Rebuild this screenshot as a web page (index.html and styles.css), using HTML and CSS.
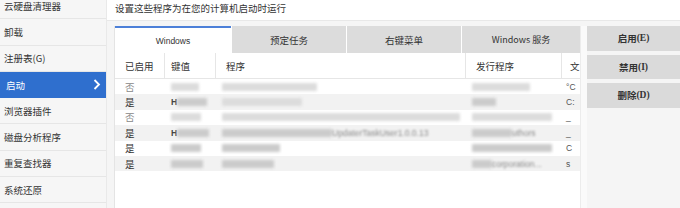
FILE: index.html
```html
<!DOCTYPE html>
<html lang="zh">
<head>
<meta charset="utf-8">
<link rel="stylesheet" href="styles.css">
</head>
<body>
<div class="app">
  <nav class="sidebar">
    <ul class="menu">
      <li class="item">云硬盘清理器</li>
      <li class="item">卸载</li>
      <li class="item">注册表(G)</li>
      <li class="item active">启动<span class="chev"><svg width="8" height="11" viewBox="0 0 8 11"><path d="M1.5 1 L6 5.5 L1.5 10" fill="none" stroke="#fff" stroke-width="1.8"/></svg></span></li>
      <li class="item">浏览器插件</li>
      <li class="item">磁盘分析程序</li>
      <li class="item">重复查找器</li>
      <li class="item">系统还原</li>
    </ul>
  </nav>
  <main class="main">
    <header class="title">设置这些程序为在您的计算机启动时运行</header>
    <div class="body">
      <section class="panel">
        <div class="tabs">
          <div class="tab on">Windows</div>
          <div class="tab">预定任务</div>
          <div class="tab">右键菜单</div>
          <div class="tab">Windows 服务</div>
        </div>
        <div class="table">
          <div class="row head">
            <div class="c c1">已启用</div>
            <div class="c c2">键值</div>
            <div class="c c3">程序</div>
            <div class="c c4">发行程序</div>
            <div class="c c5">文</div>
          </div>
          <div class="row">
            <div class="c c1 dim">否</div>
            <div class="c c2"><span class="bl" style="width:28px"></span></div>
            <div class="c c3"><span class="bl" style="width:95px"></span></div>
            <div class="c c4"><span class="bl" style="width:58px"></span></div>
            <div class="c c5 t">°C</div>
          </div>
          <div class="row alt">
            <div class="c c1">是</div>
            <div class="c c2"><b class="t">H</b><span class="bl d" style="width:30px"></span></div>
            <div class="c c3"><span class="bl" style="width:80px"></span></div>
            <div class="c c4"><span class="bl d" style="width:24px"></span></div>
            <div class="c c5 t">C:</div>
          </div>
          <div class="row">
            <div class="c c1 dim">否</div>
            <div class="c c2"><span class="bl" style="width:30px"></span></div>
            <div class="c c3"><span class="bl" style="width:238px"></span></div>
            <div class="c c4"><span class="bl" style="width:80px"></span></div>
            <div class="c c5 t">_</div>
          </div>
          <div class="row alt">
            <div class="c c1">是</div>
            <div class="c c2"><b class="t">H</b><span class="bl d" style="width:32px"></span></div>
            <div class="c c3"><span class="bl d" style="width:110px"></span><span class="t fz">UpdaterTaskUser1.0.0.13</span></div>
            <div class="c c4"><span class="bl d" style="width:40px"></span><span class="t fz">uthors</span></div>
            <div class="c c5 t">_</div>
          </div>
          <div class="row">
            <div class="c c1">是</div>
            <div class="c c2"><span class="bl d" style="width:30px"></span></div>
            <div class="c c3"><span class="bl d" style="width:58px"></span></div>
            <div class="c c4"><span class="bl d" style="width:80px"></span></div>
            <div class="c c5 t">C</div>
          </div>
          <div class="row alt">
            <div class="c c1">是</div>
            <div class="c c2"><span class="bl d" style="width:32px"></span></div>
            <div class="c c3"><span class="bl d" style="width:52px"></span></div>
            <div class="c c4"><span class="bl d" style="width:20px"></span><span class="t fz">corporation...</span></div>
            <div class="c c5 t">s</div>
          </div>
        </div>
      </section>
      <div class="gutter"></div>
      <aside class="actions">
        <button class="btn">启用<span class="k">(E)</span></button>
        <button class="btn">禁用<span class="k">(I)</span></button>
        <button class="btn">删除<span class="k">(D)</span></button>
      </aside>
    </div>
  </main>
</div>
</body>
</html>
```

FILE: styles.css
```css
* { box-sizing: border-box; margin: 0; padding: 0; }
html, body { width: 680px; height: 208px; overflow: hidden; }
body {
  background: #f5f5f5;
  font-family: "Noto Sans CJK SC", "Noto Sans", sans-serif;
  font-size: 9.5px;
  color: #333;
}
.app { display: flex; height: 208px; }

.sidebar {
  width: 107px;
  flex: none;
  background: #f6f6f6;
  border-right: 1px solid #e9e9e9;
  overflow: hidden;
}
.menu { list-style: none; margin-top: -7px; }
.item {
  height: 26.3px;
  display: flex;
  align-items: center;
  padding-left: 4px;
  border-bottom: 1px solid #e6e6e6;
  color: #333;
}
.item.active {
  background: #2f6fce;
  color: #fff;
  padding-left: 6px;
  justify-content: space-between;
  padding-right: 5px;
  border-bottom-color: #2f6fce;
}
.chev { display: flex; align-items: center; }

.main { flex: 1; display: flex; flex-direction: column; min-width: 0; }
.title {
  height: 21px;
  background: #fff;
  border-bottom: 1px solid #e8e8e8;
  padding-left: 8px;
  display: flex;
  align-items: center;
  padding-bottom: 4px;
  color: #333;
}
.body {
  flex: 1;
  display: flex;
  padding: 5px 0 0 7px;
  background: #f5f5f5;
}
.panel {
  width: 466px;
  flex: none;
  background: #fff;
  border-left: 1px solid #e4e4e4;
  display: flex;
  flex-direction: column;
}
.tabs { display: flex; height: 27px; background: #fff; }
.tab {
  height: 27px;
  width: 115px;
  background: #dcdcdc;
  border-left: 1px solid #fff;
  display: flex;
  align-items: center;
  justify-content: center;
  font-size: 9.5px;
  color: #333;
}
.tab:first-child { border-left: none; width: 116px; }
.tab:last-child { width: 119px; font-size: 9px; }
.tab.on {
  background: #fff;
  border-top: 2px solid #4d80d8;
  font-family: "Liberation Sans", "Noto Sans CJK SC", sans-serif;
  font-size: 8.5px;
}

.table { flex: 1; display: flex; flex-direction: column; }
.row { display: flex; height: 15.4px; align-items: center; background: #fff; }
.row.alt { background: #f2f2f2; }
.row.head {
  height: 26px;
  border-bottom: 1px solid #e6e6e6;
  background: #fff;
}
.c { height: 100%; display: flex; align-items: center; overflow: hidden; white-space: nowrap; }
.c1 { width: 50px; padding-left: 10px; }
.c2 { width: 51px; padding-left: 6px; }
.c3 { width: 250px; padding-left: 6px; }
.c4 { width: 96px; padding-left: 6px; }
.c5 { flex: 1; padding-left: 4px; }
.head .c { border-right: 1px solid #e6e6e6; color: #333; }
.head .c3, .head .c4 { padding-left: 10px; }
.head .c5 { border-right: none; padding-left: 8px; }
.dim { color: #888; }
.t { font-family: "Liberation Sans", sans-serif; font-size: 8.5px; color: #555; font-weight: normal; }
b.t { font-weight: bold; color: #444; }
.fz { filter: blur(0.9px); color: #888; }
.bl {
  display: inline-block;
  height: 8px;
  background: #dcdcdc;
  filter: blur(1.5px);
  border-radius: 1px;
}
.bl.d { background: #cbcbcb; }

.gutter { width: 7px; flex: none; background: #fafafa; border-left: 1px solid #ececec; }
.actions {
  flex: 1;
  display: flex;
  flex-direction: column;
  gap: 4px;
}
.btn {
  height: 24.5px;
  border: none;
  background: #dadada;
  font-family: "Noto Sans CJK SC", sans-serif;
  font-size: 9.5px;
  font-weight: bold;
  color: #333;
  display: flex;
  align-items: center;
  justify-content: center;
}
.k { font-family: "Liberation Serif", serif; font-weight: bold; font-size: 9.5px; }
```
